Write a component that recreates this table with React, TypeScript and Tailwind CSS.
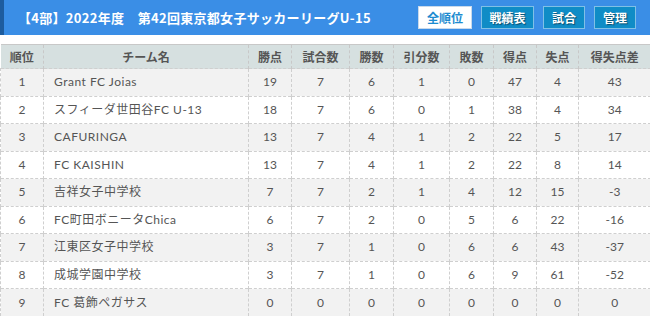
import { FC } from 'react';

interface Row {
  rank: number;
  team: string;
  pts: number;
  played: number;
  won: number;
  drawn: number;
  lost: number;
  gf: number;
  ga: number;
  gd: number;
}

const rows: Row[] = [
  { rank: 1, team: 'Grant FC Joias', pts: 19, played: 7, won: 6, drawn: 1, lost: 0, gf: 47, ga: 4, gd: 43 },
  { rank: 2, team: 'スフィーダ世田谷FC U-13', pts: 18, played: 7, won: 6, drawn: 0, lost: 1, gf: 38, ga: 4, gd: 34 },
  { rank: 3, team: 'CAFURINGA', pts: 13, played: 7, won: 4, drawn: 1, lost: 2, gf: 22, ga: 5, gd: 17 },
  { rank: 4, team: 'FC KAISHIN', pts: 13, played: 7, won: 4, drawn: 1, lost: 2, gf: 22, ga: 8, gd: 14 },
  { rank: 5, team: '吉祥女子中学校', pts: 7, played: 7, won: 2, drawn: 1, lost: 4, gf: 12, ga: 15, gd: -3 },
  { rank: 6, team: 'FC町田ボニータChica', pts: 6, played: 7, won: 2, drawn: 0, lost: 5, gf: 6, ga: 22, gd: -16 },
  { rank: 7, team: '江東区女子中学校', pts: 3, played: 7, won: 1, drawn: 0, lost: 6, gf: 6, ga: 43, gd: -37 },
  { rank: 8, team: '成城学園中学校', pts: 3, played: 7, won: 1, drawn: 0, lost: 6, gf: 9, ga: 61, gd: -52 },
  { rank: 9, team: 'FC 葛飾ペガサス', pts: 0, played: 0, won: 0, drawn: 0, lost: 0, gf: 0, ga: 0, gd: 0 },
];

const headers = ['順位', 'チーム名', '勝点', '試合数', '勝数', '引分数', '敗数', '得点', '失点', '得失点差'];
const widths = ['w-[43px]', 'w-[205px]', 'w-[43px]', 'w-[58px]', 'w-[44px]', 'w-[56px]', 'w-[44px]', 'w-[43px]', 'w-[42px]', 'w-[72px]'];

const NavButton: FC<{ label: string; width: string; active?: boolean }> = ({ label, width, active }) => (
  <button
    type="button"
    className={
      active
        ? `${width} h-[23px] border border-[#c9d9ea] bg-white text-[#1d8bd0] text-[12px] font-bold`
        : `${width} h-[23px] border border-[#7fc0e6] bg-[#0f8cc6] text-white text-[12px] font-bold [text-shadow:1px_1px_1px_rgba(0,0,0,0.45)]`
    }
  >
    {label}
  </button>
);

export default function App() {
  return (
    <div className="w-[650px] h-[317px] overflow-hidden bg-white font-['Lato','Noto_Sans_CJK_JP',sans-serif]">
      <div className="flex h-[35px] bg-[#3a8ee6]">
        <div className="w-[4px] bg-[#1d5c9e]" />
        <div className="flex flex-1 items-center pl-[14px] pr-[14px]">
          <h1 className="flex-1 text-white text-[13px] font-bold font-['Noto_Sans_CJK_JP',sans-serif] tracking-[0.3px]">
            【4部】2022年度　第42回東京都女子サッカーリーグU-15
          </h1>
          <div className="flex gap-[9px] font-['Noto_Sans_CJK_JP',sans-serif]">
            <NavButton label="全順位" width="w-[54px]" active />
            <NavButton label="戦績表" width="w-[53px]" />
            <NavButton label="試合" width="w-[42px]" />
            <NavButton label="管理" width="w-[42px]" />
          </div>
        </div>
      </div>
      <div className="h-[9px]" />
      <table className="table-fixed w-[650px] border-collapse text-[12px] text-[#555]">
        <thead>
          <tr className="h-[24px] bg-[#d6e0e0] border-t border-[#c8c8c8]">
            {headers.map((h, i) => (
              <th
                key={h}
                className={`${widths[i]} font-bold text-[#555] font-['Noto_Sans_CJK_JP',sans-serif] border-l border-dashed border-[#c8c8c8] first:border-l-0 p-0`}
              >
                {h}
              </th>
            ))}
          </tr>
        </thead>
        <tbody>
          {rows.map((r) => (
            <tr key={r.rank} className={`h-[27.5px] border-t border-dashed border-[#cfcfcf] ${r.rank % 2 === 1 ? 'bg-[#f2f2f2]' : 'bg-white'}`}>
              <td className="text-center border-l border-dashed border-[#cfcfcf] p-0">{r.rank}</td>
              <td className="text-left pl-[10px] border-l border-dashed border-[#cfcfcf] p-0 tracking-[0.5px]">{r.team}</td>
              <td className="text-center border-l border-dashed border-[#cfcfcf] p-0">{r.pts}</td>
              <td className="text-center border-l border-dashed border-[#cfcfcf] p-0">{r.played}</td>
              <td className="text-center border-l border-dashed border-[#cfcfcf] p-0">{r.won}</td>
              <td className="text-center border-l border-dashed border-[#cfcfcf] p-0">{r.drawn}</td>
              <td className="text-center border-l border-dashed border-[#cfcfcf] p-0">{r.lost}</td>
              <td className="text-center border-l border-dashed border-[#cfcfcf] p-0">{r.gf}</td>
              <td className="text-center border-l border-dashed border-[#cfcfcf] p-0">{r.ga}</td>
              <td className="text-center border-l border-dashed border-[#cfcfcf] p-0">{r.gd}</td>
            </tr>
          ))}
        </tbody>
      </table>
    </div>
  );
}
